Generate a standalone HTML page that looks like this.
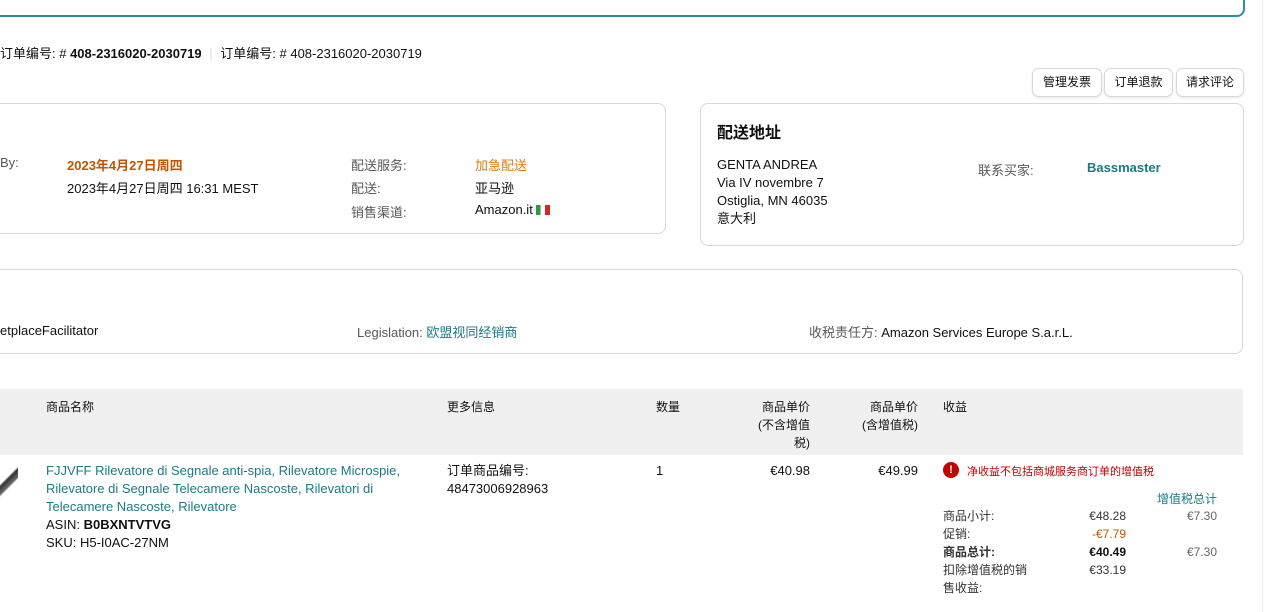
<!DOCTYPE html>
<html><head><meta charset="utf-8"><style>
body{margin:0;width:1280px;height:612px;overflow:hidden;background:#fff;font-family:"Liberation Sans","Noto Sans CJK SC",sans-serif;font-size:13px;color:#0f1111;position:relative}
.a{position:absolute;white-space:nowrap}
.card{position:absolute;border:1px solid #d5d9d9;border-radius:8px;background:#fff}
.l{color:#565959}
.btn{position:absolute;top:68px;height:27px;border:1px solid #d5d9d9;border-radius:7px;box-shadow:0 1px 2px rgba(0,0,0,.1);font-size:12px;line-height:27px;text-align:center;color:#0f1111}
.teal{color:#1b7a8a}
</style></head><body>
<div style="position:absolute;left:-20px;top:-20px;width:1261px;height:35px;border:2px solid #2a8f9e;border-top:none;border-radius:0 0 8px 8px"></div>
<div class="a" style="left:0;top:43px">订单编号: # <b>408-2316020-2030719</b> <span style="color:#ddd;margin:0 4px">|</span> 订单编号: # 408-2316020-2030719</div>
<div class="btn" style="left:1032px;width:68px">管理发票</div>
<div class="btn" style="left:1104px;width:67px">订单退款</div>
<div class="btn" style="left:1176px;width:66px">请求评论</div>
<div class="card" style="left:-20px;top:103px;width:684px;height:129px"></div>
<div class="a l" style="left:0;top:155px">By:</div>
<div class="a" style="left:67px;top:155px;color:#c45500;font-weight:bold">2023年4月27日周四</div>
<div class="a" style="left:67px;top:178px">2023年4月27日周四 16:31 MEST</div>
<div class="a l" style="left:351px;top:155px">配送服务:</div>
<div class="a l" style="left:351px;top:178px">配送:</div>
<div class="a l" style="left:351px;top:202px">销售渠道:</div>
<div class="a" style="left:475px;top:155px;color:#e47911">加急配送</div>
<div class="a" style="left:475px;top:178px">亚马逊</div>
<div class="a" style="left:475px;top:202px">Amazon.it <span style="display:inline-block;width:14px;height:10px;vertical-align:-1px;background:linear-gradient(90deg,#2a9a3a 33%,#fff 33% 66%,#d22 66%)"></span></div>
<div class="card" style="left:700px;top:103px;width:542px;height:141px"></div>
<div class="a" style="left:717px;top:119px;font-size:16px;font-weight:bold">配送地址</div>
<div class="a" style="left:717px;top:156px;line-height:18px">GENTA ANDREA<br>Via IV novembre 7<br>Ostiglia, MN 46035<br>意大利</div>
<div class="a l" style="left:978px;top:160px">联系买家:</div>
<div class="a teal" style="left:1087px;top:160px;font-weight:bold">Bassmaster</div>
<div class="card" style="left:-20px;top:269px;width:1261px;height:83px"></div>
<div class="a" style="left:0;top:323px">etplaceFacilitator</div>
<div class="a l" style="left:357px;top:322px">Legislation: <span class="teal">欧盟视同经销商</span></div>
<div class="a l" style="left:809px;top:322px">收税责任方: <span style="color:#0f1111">Amazon Services Europe S.a.r.L.</span></div>
<div style="position:absolute;left:0;top:389px;width:1243px;height:66px;background:#f0f0f0"></div>
<div class="a" style="left:46px;top:398px;font-size:12px">商品名称</div>
<div class="a" style="left:447px;top:398px;font-size:12px">更多信息</div>
<div class="a" style="left:656px;top:398px;font-size:12px">数量</div>
<div class="a" style="left:740px;top:398px;font-size:12px;line-height:18px;text-align:right;width:70px;white-space:normal">商品单价<br>(不含增值<br>税)</div>
<div class="a" style="left:830px;top:398px;font-size:12px;line-height:18px;text-align:right;width:88px">商品单价<br>(含增值税)</div>
<div class="a" style="left:943px;top:398px;font-size:12px">收益</div>
<div style="position:absolute;left:0;top:466px;width:18px;height:34px;background:linear-gradient(135deg,transparent 35%,#333 40%,#666 55%,transparent 60%)"></div>
<div class="a" style="left:46px;top:462px;line-height:18px"><span class="teal">FJJVFF Rilevatore di Segnale anti-spia, Rilevatore Microspie,<br>Rilevatore di Segnale Telecamere Nascoste, Rilevatori di<br>Telecamere Nascoste, Rilevatore</span><br>ASIN: <b>B0BXNTVTVG</b><br>SKU: H5-I0AC-27NM</div>
<div class="a" style="left:447px;top:462px;line-height:18px">订单商品编号:<br>48473006928963</div>
<div class="a" style="left:656px;top:463px">1</div>
<div class="a" style="left:740px;top:463px;width:70px;text-align:right">€40.98</div>
<div class="a" style="left:830px;top:463px;width:88px;text-align:right">€49.99</div>
<div style="position:absolute;left:943px;top:462px;width:16px;height:16px;border-radius:50%;background:#c40000;color:#fff;font-size:11px;font-weight:bold;text-align:center;line-height:16px">!</div>
<div class="a" style="left:967px;top:463px;font-size:11px;color:#c40000">净收益不包括商城服务商订单的增值税</div>
<div class="a teal" style="left:1100px;top:490px;width:117px;text-align:right;font-size:12px">增值税总计</div>
<div class="a" style="left:943px;top:507px;font-size:12px;line-height:18px;color:#333">商品小计:<br>促销:<br><b>商品总计:</b><br>扣除增值税的销<br>售收益:</div>
<div class="a" style="left:1060px;top:507px;width:66px;text-align:right;font-size:12px;line-height:18px;color:#333">€48.28<br><span style="color:#c45500">-€7.79</span><br><b style="color:#0f1111">€40.49</b><br>€33.19</div>
<div class="a" style="left:1150px;top:507px;width:67px;text-align:right;font-size:12px;line-height:18px;color:#666">€7.30<br>&nbsp;<br>€7.30</div>
<div style="position:absolute;left:1262px;top:0;width:1px;height:612px;background:#eee"></div>
</body></html>
